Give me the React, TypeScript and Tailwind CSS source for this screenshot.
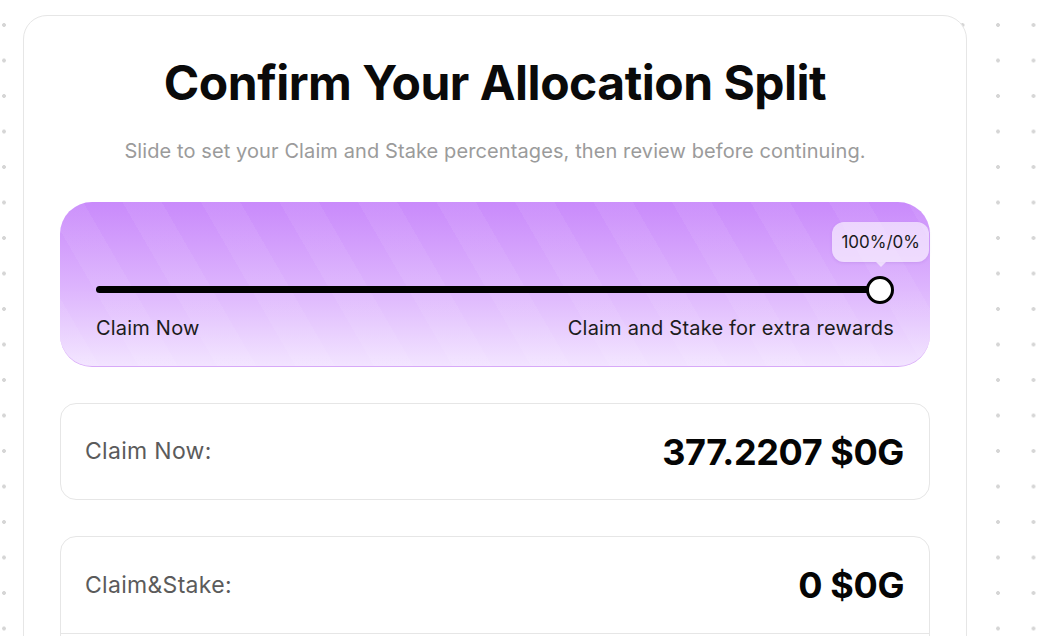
import React from "react";

export default function App() {
  return (
    <div
      className="w-[1064px] h-[636px] overflow-hidden bg-white"
      style={{ fontFamily: "Inter, 'Liberation Sans', sans-serif" }}
    >
      <div className="h-full w-full pt-[15px] pl-[23px] bg-[radial-gradient(circle,#d6d6d6_1.6px,transparent_2.2px)] bg-[length:35.5px_35.5px] bg-[position:-13.75px_7.25px]">
        <div className="w-[944px] h-[700px] rounded-[24px] border border-[#e6e6e6] bg-white px-[36px] pt-[40px]">
          <h1 className="text-center text-[48px] leading-[53px] font-bold text-[#0a0a0a] tracking-[-0.5px]">
            Confirm Your Allocation Split
          </h1>
          <p className="mt-[28px] text-center text-[20px] leading-[28px] text-[#9b9b9b] tracking-[0.1px]">
            Slide to set your Claim and Stake percentages, then review before continuing.
          </p>

          <div className="mt-[37px] h-[165px] rounded-[32px] border-b border-[#d8a9f8] bg-[repeating-linear-gradient(60deg,rgba(255,255,255,0.06)_0px,rgba(255,255,255,0.06)_34px,rgba(255,255,255,0)_34px,rgba(255,255,255,0)_68px),linear-gradient(to_bottom,#c98afb,#dcb2fd_50%,#f2e4ff)] px-[36px] pt-[74px]">
            <div className="relative h-[28px]">
              <div className="absolute left-0 right-[14px] top-[10px] h-[7px] rounded-full bg-black" />
              <div className="absolute right-0 top-0 h-[28px] w-[28px] rounded-full border-[3px] border-black bg-white" />
              <div className="absolute right-[-35px] top-[-54px] flex flex-col items-center">
                <div className="rounded-[12px] bg-white/60 px-[9px] py-[8px] text-[17px] leading-[24px] text-[#1a1a1a] shadow-[0_1px_3px_rgba(120,60,180,0.15)]">
                  100%/0%
                </div>
                <div className="h-0 w-0 border-x-[5px] border-t-[5px] border-x-transparent border-t-white/60" />
              </div>
            </div>
            <div className="mt-[12px] flex justify-between text-[20px] leading-[24px] text-[#1c1c1c] tracking-[0.2px]">
              <span>Claim Now</span>
              <span>Claim and Stake for extra rewards</span>
            </div>
          </div>

          <div className="mt-[36px] flex h-[97px] items-center justify-between rounded-[16px] border border-[#e6e6e6] pl-[24px] pr-[25px]">
            <span className="text-[23px] text-[#5b5b5b] tracking-[0.3px]">Claim Now:</span>
            <span className="text-[36px] font-bold text-[#050505] tracking-[-0.4px]">377.2207 $0G</span>
          </div>

          <div className="mt-[36px] rounded-[16px] border border-[#e6e6e6]">
            <div className="flex h-[96px] items-center justify-between pl-[24px] pr-[25px]">
              <span className="text-[23px] text-[#5b5b5b] tracking-[0.3px]">Claim&amp;Stake:</span>
              <span className="text-[36px] font-bold text-[#050505] tracking-[-0.4px]">0 $0G</span>
            </div>
            <div className="h-[60px] border-t border-[#e6e6e6]" />
          </div>
        </div>
      </div>
    </div>
  );
}
